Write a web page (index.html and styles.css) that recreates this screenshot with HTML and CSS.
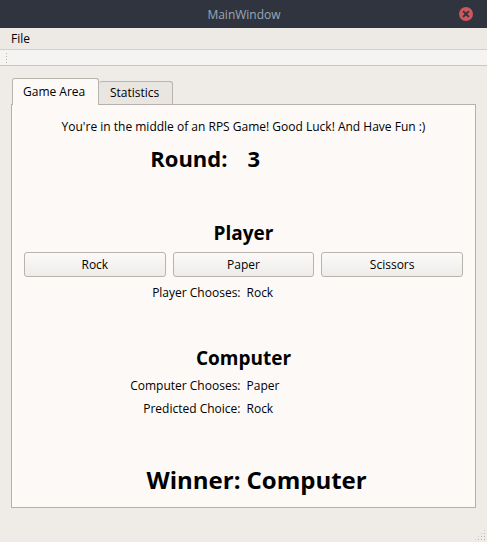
FILE: index.html
```html
<!DOCTYPE html>
<html>
<head>
<meta charset="utf-8">
<link rel="stylesheet" href="styles.css">
</head>
<body>
<div class="window">
  <div class="titlebar">
    <span class="title">MainWindow</span>
    <span class="close">
      <svg width="14" height="14" viewBox="0 0 14 14"><circle cx="7" cy="7" r="7" fill="#cc575d"/><path d="M4.6 4.6 L9.4 9.4 M9.4 4.6 L4.6 9.4" stroke="#2f343f" stroke-width="1.8" stroke-linecap="round"/></svg>
    </span>
  </div>
  <div class="menubar"><span class="menu-item">File</span></div>
  <div class="toolbar"><span class="handle"></span></div>
  <div class="central">
    <div class="tabs">
      <div class="tab tab-active">Game Area</div>
      <div class="tab tab-stats">Statistics</div>
    </div>
    <div class="pane">
      <div class="intro">You're in the middle of an RPS Game! Good Luck! And Have Fun :)</div>
      <div class="form round"><span class="lbl round-lbl">Round:</span><span class="val">3</span></div>
      <div class="heading player">Player</div>
      <div class="buttons">
        <button class="btn">Rock</button>
        <button class="btn">Paper</button>
        <button class="btn">Scissors</button>
      </div>
      <div class="form small pchoice"><span class="lbl">Player Chooses:</span><span class="val">Rock</span></div>
      <div class="heading computer">Computer</div>
      <div class="form small cchoice"><span class="lbl">Computer Chooses:</span><span class="val">Paper</span></div>
      <div class="form small predicted"><span class="lbl">Predicted Choice:</span><span class="val">Rock</span></div>
      <div class="form winner"><span class="lbl">Winner:</span><span class="val">Computer</span></div>
    </div>
    <div class="grip"></div>
  </div>
</div>
</body>
</html>
```
FILE: styles.css
```css
* { box-sizing: border-box; }
html, body { margin: 0; padding: 0; }
body {
  width: 487px;
  height: 542px;
  overflow: hidden;
  font-family: "Open Sans", "Noto Sans", sans-serif;
  font-size: 12px;
  color: #000;
  background: #efece8;
}
.window { width: 487px; height: 542px; display: flex; flex-direction: column; }
.titlebar {
  height: 28px;
  background: #2f343f;
  position: relative;
  display: flex;
  align-items: center;
  justify-content: center;
}
.title { color: #9aa7b9; font-size: 12px; margin-left: 1px; }
.close { position: absolute; left: 459px; top: 7px; width: 14px; height: 14px; display: block; }
.close svg { display: block; }
.menubar {
  height: 21px;
  background: #edeae6;
  display: flex;
  align-items: center;
  padding-left: 11px;
}
.menu-item { font-size: 12px; line-height: 18px; }
.toolbar {
  height: 17px;
  background: #f6f4f2;
  border-top: 1px solid #d4d0cb;
  border-bottom: 1px solid #c9c5bf;
  padding: 2px 0 0 5px;
}
.handle {
  display: block;
  width: 4px;
  height: 13px;
  background-image: radial-gradient(circle, #b4b0aa 0.8px, transparent 1px);
  background-size: 3px 3px;
}
.central {
  flex: 1;
  position: relative;
  padding: 12px 12px 0 11px;
}
.tabs { display: flex; align-items: flex-end; height: 26px; padding-left: 1px; position: relative; z-index: 1; }
.tab {
  height: 23px;
  padding: 0 0 0 10px;
  border: 1px solid #b9b4ae;
  border-bottom: none;
  border-radius: 3px 3px 0 0;
  background: #e9e6e2;
  line-height: 22px;
  white-space: nowrap;
}
.tab-stats { width: 74px; margin-left: 0; border-left: none; padding-left: 11px; }
.tab-active {
  height: 27px;
  margin-bottom: -1px;
  background: #fcf9f7;
  width: 87px;
  line-height: 25px;
}
.pane {
  width: 465px;
  height: 404px;
  border: 1px solid #b5b0ab;
  background: #fcf9f7;
  display: flex;
  flex-direction: column;
  padding: 0 12px;
}
.intro { text-align: center; line-height: 18px; margin-top: 13px; }
.form { display: grid; grid-template-columns: 1fr 1fr; column-gap: 6px; }
.lbl { text-align: right; }
.val { text-align: left; }
.round { font-size: 22px; font-weight: 700; line-height: 30px; margin-top: 7px; }
.round-lbl { padding-right: 13px; }
.round .val { padding-left: 1px; }
.heading { text-align: center; font-weight: 700; font-size: 19px; line-height: 28px; }
.player { margin-top: 46px; }
.computer { margin-top: 42px; }
.buttons { display: flex; gap: 7px; margin-top: 5px; }
.btn {
  flex: 1;
  height: 25px;
  font-family: inherit;
  font-size: 12px;
  color: #000;
  border: 1px solid #b8b3ad;
  border-radius: 3px;
  background: linear-gradient(#fbfaf9, #eeece9);
  padding: 0;
}
.small { line-height: 18px; }
.pchoice { margin-top: 7px; }
.cchoice { margin-top: 5px; }
.predicted { margin-top: 5px; }
.winner { font-size: 24px; font-weight: 700; line-height: 32px; margin-top: 46px; }
.grip {
  position: absolute;
  right: 1px;
  bottom: 1px;
  width: 12px;
  height: 12px;
  background-image: radial-gradient(circle, #b4b0aa 0.8px, transparent 1px);
  background-size: 3px 3px;
  clip-path: polygon(100% 0, 100% 100%, 0 100%);
}
```
